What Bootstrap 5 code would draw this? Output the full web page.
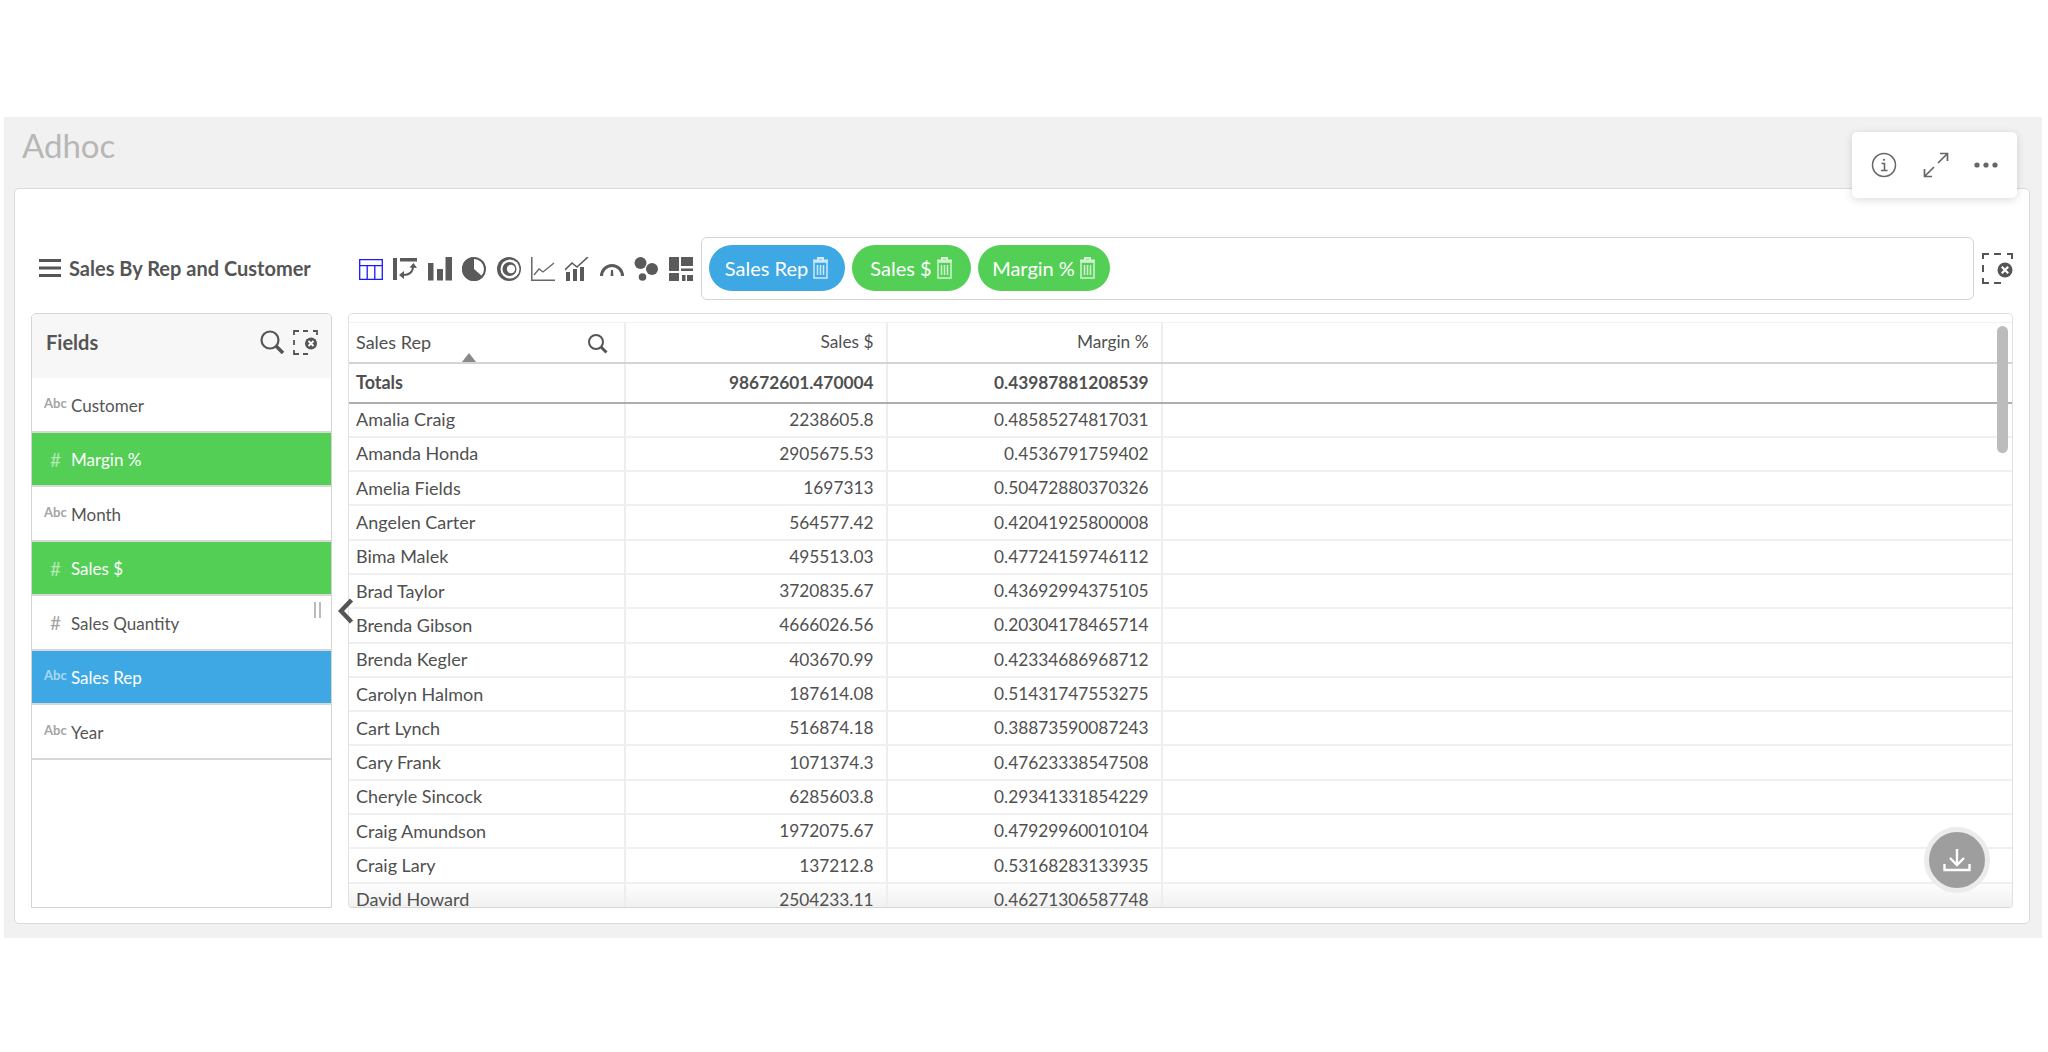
<!DOCTYPE html>
<html lang="en">
<head>
  <meta charset="UTF-8">
  <title>Adhoc</title>
  <meta name="viewport" content="width=device-width, initial-scale=1">
  <link href="https://cdn.jsdelivr.net/npm/bootstrap@5.3.0/dist/css/bootstrap.min.css" rel="stylesheet">
  <style>
    body { background: #fff; font-family: "Lato", "Liberation Sans", sans-serif; color: #555; overflow: hidden; }

    .band { margin: 117px 6px 0 4px; height: 821px; background: #f1f1f1; position: relative; }
    .band-title { height: 71px; padding: 9px 0 0 18px; margin: 0; font-size: 33px; font-weight: 400; color: #b7b7b7; font-family: "Lato", sans-serif; }

    .main-card { margin: 0 12px 0 10px; height: 736px; background: #fff; border: 1.5px solid #dadada; border-radius: 5px; padding: 48px 16px 0 16px; position: relative; }

    .toolbar { height: 63px; }
    .report-title { width: 328px; flex: none; padding: 0 0 2px 8px; font-size: 20px; font-weight: 700; color: #555; }
    .chart-icons { gap: 10.4px; }
    .chart-icons svg { width: 24px; height: 24px; fill: #5a5a5a; display: block; }

    .drop-zone { margin-left: 8px; height: 63px; border: 1.5px solid #d4d4d4; border-radius: 6px; padding: 0 6px 2px 7px; gap: 7px; }
    .pill { height: 46px; border-radius: 23px; color: #fff; font-size: 20px; gap: 5px; }
    .pill svg { width: 15px; height: 22px; }
    .pill-blue { background: #3da8e4; width: 136px; }
    .pill-green { background: #53cf56; width: 119px; }
    .pill-green.wide { width: 132px; }
    .clear-all { margin-left: 8px; width: 31px; height: 31px; flex: none; }

    .work-row { margin-top: 13px; height: 595px; position: relative; gap: 16px; }

    .fields-panel { width: 301px; flex: none; border: 1.5px solid #d4d4d4; border-radius: 5px 5px 0 0; overflow: hidden; }
    .fields-head { height: 64px; background: #f7f7f7; padding: 0 13px 8px 14px; font-size: 20px; font-weight: 700; color: #555; }
    .fields-panel .list-group-flush .field-item { height: 54.5px; padding: 2px 0 0 12px; border: 0; border-bottom: 2px solid #d8d8d8; border-radius: 0; font-size: 17px; color: #555; background: #fff; }
    .field-type { width: 26px; flex: none; font-size: 13px; font-weight: 700; color: #a4a4a4; margin-right: 1px; position: relative; top: -2px; }
    .field-type.num { font-size: 19px; font-weight: 400; text-align: center; top: 0; padding-right: 3px; }
    .fields-panel .list-group-flush .field-green { background: #53cf56; color: #fff; }
    .fields-panel .list-group-flush .field-blue { background: #3da8e4; color: #fff; }
    .field-green .field-type, .field-blue .field-type { color: #fff; opacity: .55; }
    .grip { width: 7px; height: 16px; border-left: 2px solid #bbb; border-right: 2px solid #bbb; margin: -26px 10px 0 auto; }

    .grid-panel { flex: 1; border: 1.5px solid #e2e2e2; border-bottom-color: #d8d8d8; border-radius: 5px 5px 4px 4px; overflow: hidden; padding-top: 8px; position: relative; }
    .grid { table-layout: fixed; width: 100%; margin: 0; border-top: 1px solid #f2f2f2; font-size: 18px; }
    .grid th, .grid td { height: 34.3px; padding: 0 12.5px 0 7px; vertical-align: middle; border-bottom: 2px solid #f0f0f0; border-right: 2px solid #eeeeee; color: #505050; font-weight: 400; white-space: nowrap; box-shadow: none; }
    .grid th:last-child, .grid td:last-child { border-right: 0; }
    .grid td.text-end, .grid th.text-end { font-size: 17.3px; }
    .grid thead th { height: 40px; border-bottom: 2px solid #d4d4d4; position: relative; }
    .grid tr.totals td { height: 40px; border-bottom: 2px solid #aeaeae; font-weight: 700; }
    .grid tr.last-row td { background: linear-gradient(#fdfdfd, #ececec); }
    .sort-arrow { position: absolute; left: 113px; bottom: 0; width: 0; height: 0; border: 7px solid transparent; border-top: 0; border-bottom: 9px solid #888; }
    .col-search { position: absolute; right: 16px; top: 10px; width: 21px; height: 21px; }
    .scroll-thumb { position: absolute; right: 4px; top: 12px; width: 11px; height: 127px; border-radius: 6px; background: #bcbcbc; }

    .collapse-arrow { position: absolute; left: 307px; top: 285px; width: 16px; height: 26px; z-index: 2; }
    .download-btn { position: absolute; right: 23px; bottom: 15px; width: 66px; height: 66px; border-radius: 50%; background: #9e9e9e; border: 5px solid #ececec; }

    .tile-menu { position: absolute; right: 25px; top: 15px; width: 165px; height: 66px; background: #fff; border-radius: 5px; box-shadow: 0 2px 8px rgba(0,0,0,.14); padding: 0 19px; z-index: 3; }
  </style>
</head>
<body>

<div class="band">
  <h1 class="band-title">Adhoc</h1>

  <!-- floating tile menu -->
  <div class="tile-menu d-flex align-items-center justify-content-between">
    <svg width="26" height="26" viewBox="0 0 26 26" fill="none" stroke="#666" stroke-width="1.5"><circle cx="13" cy="13" r="11.5"/><path d="M10.5 11.5h3v7M10 18.5h6.5" stroke-width="1.6"/><circle cx="13" cy="7.8" r="1.1" fill="#666" stroke="none"/></svg>
    <svg width="26" height="26" viewBox="0 0 26 26" fill="none" stroke="#666" stroke-width="1.7"><path d="M15 11 24 2M17 1.5h7.5V9M11 15l-9 9M1.5 17v7.5H9"/></svg>
    <svg width="24" height="6" viewBox="0 0 24 6" fill="#666"><circle cx="3" cy="3" r="2.6"/><circle cx="12" cy="3" r="2.6"/><circle cx="21" cy="3" r="2.6"/></svg>
  </div>

  <div class="main-card">
    <!-- toolbar -->
    <div class="toolbar d-flex align-items-center">
      <div class="report-title d-flex align-items-center gap-2">
        <svg width="22" height="18" viewBox="0 0 22 18" fill="#555"><rect width="22" height="3"/><rect y="7.5" width="22" height="3"/><rect y="15" width="22" height="3"/></svg>
        <span>Sales By Rep and Customer</span>
      </div>
      <div class="chart-icons d-flex align-items-center">
        <svg viewBox="0 0 24 24"><path fill="none" stroke="#1a1aff" stroke-width="1.3" d="M.7 2.7h22.6v19.6H.7zM.7 8.7h22.6M8.2 8.7v13.6M15.8 8.7v13.6"/></svg>
        <svg viewBox="0 0 24 24"><rect y="1" width="4" height="22"/><rect x="7" y="1" width="17" height="3.5"/><path fill="none" stroke="#5a5a5a" stroke-width="2" d="M20 9c0 6-4 9-10 9"/><path d="M16.5 10.5 20.5 6 24 11zM11 14v8l-5-4z"/></svg>
        <svg viewBox="0 0 24 24"><rect y="6" width="5.5" height="17.5"/><rect x="9" y="12" width="6" height="11.5"/><rect x="17.5" y="0" width="6.5" height="23.5"/></svg>
        <svg viewBox="0 0 24 24"><circle cx="12" cy="12" r="11" fill="#fff" stroke="#5a5a5a" stroke-width="2"/><path d="M12 0a12 12 0 0 0 0 24 12 12 0 0 0 9-4l-9-8z"/></svg>
        <svg viewBox="0 0 24 24"><circle cx="12" cy="12" r="12"/><circle cx="13" cy="12" r="9.5" fill="#fff"/><circle cx="12.5" cy="12" r="7"/><circle cx="14" cy="12" r="4.2" fill="#fff"/></svg>
        <svg viewBox="0 0 24 24"><path fill="none" stroke="#666" stroke-width="1.5" d="M.8 0v23.2H24"/><path fill="none" stroke="#666" stroke-width="1.3" d="M3 18l5-6 4 3 11-9"/></svg>
        <svg viewBox="0 0 24 24"><rect x="1" y="15" width="4" height="9"/><rect x="8" y="12" width="4" height="12"/><rect x="15" y="10" width="4" height="14"/><path fill="none" stroke="#5a5a5a" stroke-width="1.6" d="M0 13l7-7 5 4 11-10"/></svg>
        <svg viewBox="0 0 24 24"><path fill="none" stroke="#5a5a5a" stroke-width="3" d="M1.5 19a10.5 10.5 0 0 1 21 0"/><path d="M11 13h2l.4 6h-2.8z"/></svg>
        <svg viewBox="0 0 24 24"><circle cx="6.5" cy="6" r="6"/><circle cx="18" cy="12" r="6"/><circle cx="8.5" cy="20" r="3.8"/></svg>
        <svg viewBox="0 0 24 24"><rect y="0" width="10" height="14"/><rect x="12" y="0" width="12" height="9"/><rect x="12" y="11.5" width="12" height="2.5"/><rect y="16" width="10" height="8"/><rect x="13" y="18" width="3.5" height="6"/><rect x="18" y="18" width="6" height="6"/></svg>
      </div>
      <div class="drop-zone d-flex align-items-center flex-grow-1">
        <div class="pill pill-blue d-flex align-items-center justify-content-center"><span>Sales Rep</span>
          <svg viewBox="0 0 15 22" fill="none" stroke="#fff" stroke-opacity=".75"><path d="M5 2.5V1h5v1.5M0 3.5h15" stroke-width="2"/><rect x="1" y="5" width="13" height="16" stroke-width="1.5"/><path d="M4.5 8v10M7.5 8v10M10.5 8v10" stroke-width="1.5"/></svg>
        </div>
        <div class="pill pill-green d-flex align-items-center justify-content-center"><span>Sales $</span>
          <svg viewBox="0 0 15 22" fill="none" stroke="#fff" stroke-opacity=".75"><path d="M5 2.5V1h5v1.5M0 3.5h15" stroke-width="2"/><rect x="1" y="5" width="13" height="16" stroke-width="1.5"/><path d="M4.5 8v10M7.5 8v10M10.5 8v10" stroke-width="1.5"/></svg>
        </div>
        <div class="pill pill-green wide d-flex align-items-center justify-content-center"><span>Margin %</span>
          <svg viewBox="0 0 15 22" fill="none" stroke="#fff" stroke-opacity=".75"><path d="M5 2.5V1h5v1.5M0 3.5h15" stroke-width="2"/><rect x="1" y="5" width="13" height="16" stroke-width="1.5"/><path d="M4.5 8v10M7.5 8v10M10.5 8v10" stroke-width="1.5"/></svg>
        </div>
      </div>
      <svg class="clear-all" viewBox="0 0 31 31" fill="none"><path stroke="#555" stroke-width="2" d="M1 6V1h6M12 1h7M25 1h5v5M1 12v7M1 25v5h6M12 30h7"/><circle cx="23" cy="17" r="7.5" fill="#555"/><path stroke="#fff" stroke-width="2.2" d="M19.8 13.8l6.4 6.4M26.2 13.8l-6.4 6.4"/></svg>
    </div>

    <div class="work-row d-flex">
      <!-- fields list -->
      <div class="fields-panel">
        <div class="fields-head d-flex align-items-center justify-content-between">
          <span>Fields</span>
          <span class="d-flex align-items-center gap-2">
            <svg width="25" height="24" viewBox="0 0 25 24" fill="none" stroke="#555"><circle cx="10" cy="10" r="8.5" stroke-width="2.2"/><path d="M16 16l7 7" stroke-width="3.5"/></svg>
            <svg width="25" height="25" viewBox="0 0 25 25" fill="none"><path stroke="#555" stroke-width="1.8" d="M1 5V1h5M10 1h5M20 1h4v4M1 10v5M1 20v4h5M10 24h5"/><circle cx="18" cy="13.5" r="6" fill="#555"/><path stroke="#fff" stroke-width="1.8" d="M15.5 11l5 5M20.5 11l-5 5"/></svg>
          </span>
        </div>
        <ul class="list-group list-group-flush">
          <li class="list-group-item field-item d-flex align-items-center"><span class="field-type">Abc</span>Customer</li>
          <li class="list-group-item field-item field-green d-flex align-items-center"><span class="field-type num">#</span>Margin %</li>
          <li class="list-group-item field-item d-flex align-items-center"><span class="field-type">Abc</span>Month</li>
          <li class="list-group-item field-item field-green d-flex align-items-center"><span class="field-type num">#</span>Sales $</li>
          <li class="list-group-item field-item d-flex align-items-center"><span class="field-type num">#</span>Sales Quantity<span class="grip"></span></li>
          <li class="list-group-item field-item field-blue d-flex align-items-center"><span class="field-type">Abc</span>Sales Rep</li>
          <li class="list-group-item field-item d-flex align-items-center"><span class="field-type">Abc</span>Year</li>
        </ul>
      </div>

      <svg class="collapse-arrow" viewBox="0 0 16 26" fill="none" stroke="#555" stroke-width="4.5"><path d="M13.5 2 3 13l10.5 11"/></svg>

      <!-- data grid -->
      <div class="grid-panel">
        <table class="table grid">
          <colgroup><col style="width:276px"><col style="width:262px"><col style="width:275px"><col></colgroup>
          <thead>
            <tr>
              <th>Sales Rep<span class="sort-arrow"></span>
                <svg class="col-search" viewBox="0 0 21 21" fill="none" stroke="#555"><circle cx="9" cy="9" r="7" stroke-width="2"/><path d="M14 14l5.5 5.5" stroke-width="3"/></svg>
              </th>
              <th class="text-end">Sales $</th>
              <th class="text-end">Margin %</th>
              <th></th>
            </tr>
          </thead>
          <tbody>
            <tr class="totals"><td>Totals</td><td class="text-end">98672601.470004</td><td class="text-end">0.43987881208539</td><td></td></tr>
            <tr><td>Amalia Craig</td><td class="text-end">2238605.8</td><td class="text-end">0.48585274817031</td><td></td></tr>
            <tr><td>Amanda Honda</td><td class="text-end">2905675.53</td><td class="text-end">0.4536791759402</td><td></td></tr>
            <tr><td>Amelia Fields</td><td class="text-end">1697313</td><td class="text-end">0.50472880370326</td><td></td></tr>
            <tr><td>Angelen Carter</td><td class="text-end">564577.42</td><td class="text-end">0.42041925800008</td><td></td></tr>
            <tr><td>Bima Malek</td><td class="text-end">495513.03</td><td class="text-end">0.47724159746112</td><td></td></tr>
            <tr><td>Brad Taylor</td><td class="text-end">3720835.67</td><td class="text-end">0.43692994375105</td><td></td></tr>
            <tr><td>Brenda Gibson</td><td class="text-end">4666026.56</td><td class="text-end">0.20304178465714</td><td></td></tr>
            <tr><td>Brenda Kegler</td><td class="text-end">403670.99</td><td class="text-end">0.42334686968712</td><td></td></tr>
            <tr><td>Carolyn Halmon</td><td class="text-end">187614.08</td><td class="text-end">0.51431747553275</td><td></td></tr>
            <tr><td>Cart Lynch</td><td class="text-end">516874.18</td><td class="text-end">0.38873590087243</td><td></td></tr>
            <tr><td>Cary Frank</td><td class="text-end">1071374.3</td><td class="text-end">0.47623338547508</td><td></td></tr>
            <tr><td>Cheryle Sincock</td><td class="text-end">6285603.8</td><td class="text-end">0.29341331854229</td><td></td></tr>
            <tr><td>Craig Amundson</td><td class="text-end">1972075.67</td><td class="text-end">0.47929960010104</td><td></td></tr>
            <tr><td>Craig Lary</td><td class="text-end">137212.8</td><td class="text-end">0.53168283133935</td><td></td></tr>
            <tr class="last-row"><td>David Howard</td><td class="text-end">2504233.11</td><td class="text-end">0.46271306587748</td><td></td></tr>
          </tbody>
        </table>
        <div class="scroll-thumb"></div>
      </div>

      <button class="download-btn btn p-0 d-flex align-items-center justify-content-center" type="button" aria-label="Download">
        <svg width="28" height="24" viewBox="0 0 28 24" fill="none" stroke="#fff" stroke-width="2.4"><path d="M14 1v15M7 10l7 7 7-7M1.5 16v6h25v-6"/></svg>
      </button>
    </div>
  </div>
</div>

<script src="https://cdn.jsdelivr.net/npm/bootstrap@5.3.0/dist/js/bootstrap.bundle.min.js"></script>
</body>
</html>
